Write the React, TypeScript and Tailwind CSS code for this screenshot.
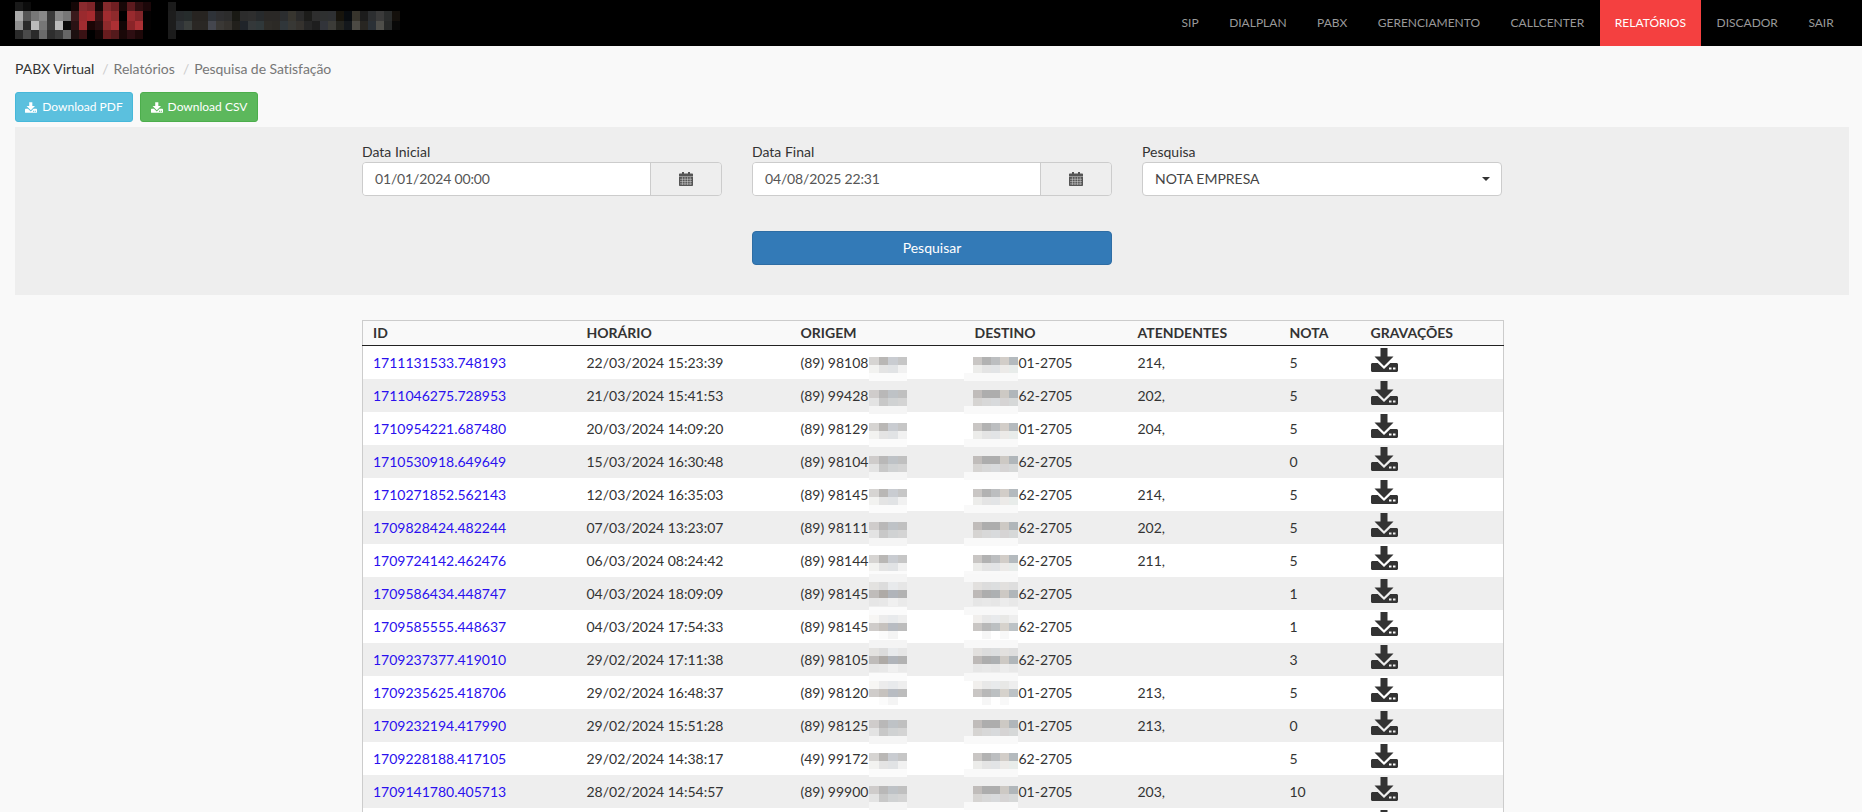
import React from "react";

const LOGO_COLORS: string[][] = [
  ["#1a1a1a","#0c0c0c","#000","#000","#000","#000","#000","#150707","#8a2a2e","#7e2428","#120606","#842a2c","#701f22","#180808","#5c1a1e","#2e0e10","#1c0709"],
  ["#aaaaaa","#555555","#777777","#888888","#3a3a3a","#888888","#777777","#3a1a1c","#9a2a2e","#a62a2e","#3a1214","#a02c30","#8e2a2c","#000","#982a2e","#822428","#050202"],
  ["#8f8f8f","#2a2a2a","#bbbbbb","#777777","#3c3c3c","#bbbbbb","#0a0a0a","#2a1214","#a02c30","#1c0606","#280e10","#8e2a2c","#ac3034","#120606","#8a2428","#ac3034","#050202"],
  ["#2a2a2a","#4a4a4a","#2a2a2a","#6a6a6a","#2e2e2e","#3a3a3a","#666666","#1c1010","#3a1214","#000","#120606","#681c1e","#541a1c","#1a0808","#2e0e12","#1e0809","#000"],
];
const TITLE_TOP = ["#1d1d1d","#26292b","#262c2c","#272421","#272421","#2e3238","#2e2e30","#2c2c2c","#191914","#2c2c2c","#2e2e2e","#272a2c","#2a2826","#2a2826","#2b2d2f","#37352f","#2a2a2a","#1c1c1a","#2e2e2e","#2e3030","#2e3032","#17140c","#080c10","#37342c","#1c1c1c","#2c2e30","#3a3a3a","#2a2c2c","#14100c"];
const TITLE_BOT = ["#1d1d1d","#2e3236","#3a3e3c","#2a2724","#2a2724","#44464e","#3a3835","#35322e","#22201c","#20242a","#34383a","#30383a","#2e2c28","#2c2a26","#30363a","#383835","#35322e","#262626","#1e1e1e","#32343a","#3c3c38","#24241f","#14181c","#4c4a44","#282622","#2a3036","#4e4e4a","#262828","#080808"];

function Mosaic({ rows, w, h }: { rows: string[][]; w: number; h: number }) {
  return (
    <svg width={rows[0].length * w} height={rows.length * h} shapeRendering="crispEdges" className="block">
      {rows.map((r, y) => r.map((c, x) => <rect key={x} x={x * w} y={y * h} width={w} height={h} fill={c} />))}
    </svg>
  );
}

function DownloadIcon({ className }: { className?: string }) {
  return (
    <svg viewBox="0 0 27 24" className={className} fill="currentColor" fillRule="evenodd">
      <path d="M9.5 0h7v8.5h6L13 18 3.5 8.5h6z" />
      <path d="M1.5 15h5.2l6.3 6 6.3-6h6.2c.8 0 1.5.7 1.5 1.5v6c0 .8-.7 1.5-1.5 1.5h-24C.7 24 0 23.300 0 22.500v-6C0 15.700.7 15 1.500 15zM18 19.500v2h2.500v-2zM22 19.500v2h2.500v-2z" />
    </svg>
  );
}

function CalendarIcon() {
  return (
    <svg viewBox="0 0 14 14" className="h-[14px] w-[14px] text-[#555]" fill="currentColor">
      <path d="M3 0h2v1.500h4V0h2v1.500h2c.6 0 1 .4 1 1V13c0 .6-.4 1-1 1H1c-.6 0-1-.4-1-1V2.500c0-.6.4-1 1-1h2z" />
      <path d="M0 4.500h14M1 7.300h12M1 9.600h12M1 11.900h12M3.400 5v8M6 5v8M8.600 5v8M11.200 5v8" stroke="#eeeeee" strokeWidth="0.6" strokeOpacity="0.75" fill="none" />
    </svg>
  );
}

type Row = { id: string; time: string; from: string; to: string; att: string; note: string };
const DATA: Row[] = [
  { id: "1711131533.748193", time: "22/03/2024 15:23:39", from: "(89) 98108", to: "01-2705", att: "214,", note: "5" },
  { id: "1711046275.728953", time: "21/03/2024 15:41:53", from: "(89) 99428", to: "62-2705", att: "202,", note: "5" },
  { id: "1710954221.687480", time: "20/03/2024 14:09:20", from: "(89) 98129", to: "01-2705", att: "204,", note: "5" },
  { id: "1710530918.649649", time: "15/03/2024 16:30:48", from: "(89) 98104", to: "62-2705", att: "", note: "0" },
  { id: "1710271852.562143", time: "12/03/2024 16:35:03", from: "(89) 98145", to: "62-2705", att: "214,", note: "5" },
  { id: "1709828424.482244", time: "07/03/2024 13:23:07", from: "(89) 98111", to: "62-2705", att: "202,", note: "5" },
  { id: "1709724142.462476", time: "06/03/2024 08:24:42", from: "(89) 98144", to: "62-2705", att: "211,", note: "5" },
  { id: "1709586434.448747", time: "04/03/2024 18:09:09", from: "(89) 98145", to: "62-2705", att: "", note: "1" },
  { id: "1709585555.448637", time: "04/03/2024 17:54:33", from: "(89) 98145", to: "62-2705", att: "", note: "1" },
  { id: "1709237377.419010", time: "29/02/2024 17:11:38", from: "(89) 98105", to: "62-2705", att: "", note: "3" },
  { id: "1709235625.418706", time: "29/02/2024 16:48:37", from: "(89) 98120", to: "01-2705", att: "213,", note: "5" },
  { id: "1709232194.417990", time: "29/02/2024 15:51:28", from: "(89) 98125", to: "01-2705", att: "213,", note: "0" },
  { id: "1709228188.417105", time: "29/02/2024 14:38:17", from: "(49) 99172", to: "62-2705", att: "", note: "5" },
  { id: "1709141780.405713", time: "28/02/2024 14:54:57", from: "(89) 99900", to: "01-2705", att: "203,", note: "10" },
];

const PATCH_O: Record<string, string[][]> = {
  white: [
    ["#d6d4d2","#b9b7b5","#c9ccd1","#c6c6c6"],
    ["#f2f2f0","#e4e4e4","#e1e3e5","#f1f1f1"],
    ["#fbfbfb","#fbfbfb","#fbfbfb","#fbfbfb"],
  ],
  grey: [
    ["#cfcccb","#b9b8b8","#bec2c6","#c0c0c0"],
    ["#e3e3e3","#c8c8c8","#d0d2d3","#d4d4d4"],
    ["#f5f5f5","#f5f5f5","#f5f5f5","#f5f5f5"],
  ],
};
const PATCH_O_HIGH: Record<string, string[][]> = {
  white: [
    ["#fbfbfb","#fbfbfb","#fbfbfb","#fbfbfb"],
    ["#f7f6f4","#ececec","#e8eaec","#eeeeee"],
    ["#cfccca","#c6c2be","#b8bcc2","#bcbcbc"],
    ["#ffffff","#fbfbfb","#f4f4f4","#ffffff"],
  ],
  grey: [
    ["#f4f4f4","#f4f4f4","#f4f4f4","#f4f4f4"],
    ["#e3e2e0","#dcdcdc","#e8eaec","#e6e6e6"],
    ["#bfbcba","#aeaaa6","#b0b4ba","#b2b2b2"],
    ["#e6e6e6","#e8e8e8","#f0f0f0","#eaeaea"],
  ],
};
const PATCH_D: Record<string, string[][]> = {
  white: [
    ["#c9c6c4","#b2b2b2","#bcbec0","#d2cdc8","#b4babe"],
    ["#ececea","#e4e4e4","#e2e4e6","#eceae8","#e8ecea"],
  ],
  grey: [
    ["#c0bcba","#adadad","#adadad","#cdc9c4","#b0b6ba"],
    ["#d6d4d2","#d8d8d8","#d8dadc","#d6d4d4","#d6d8d8"],
  ],
};
const PATCH_D_HIGH: Record<string, string[][]> = {
  white: [
    ["#f1efed","#e8e8e8","#e8eaec","#e8e8e6","#eeeeee"],
    ["#c9c6c4","#b8b8b8","#bcc0c2","#d6d2cc","#bcc2c6"],
    ["#ffffff","#f6f6f6","#ffffff","#f8f8f8","#ffffff"],
  ],
  grey: [
    ["#e2e0de","#dcdcdc","#dcdedf","#e2e0de","#dedede"],
    ["#bdb9b7","#adadad","#adb0b2","#cdc9c4","#b0b6ba"],
    ["#e6e6e6","#e8e8e8","#e6e6e6","#ececec","#e8e8e8"],
  ],
};

function TableRow({ r, i }: { r: Row; i: number }) {
  const shade = i % 2 === 1 ? "grey" : "white";
  const high = i >= 7 && i <= 10;
  return (
    <tr className={`h-[33px] ${i % 2 === 1 ? "bg-[#eeeeee]" : "bg-white"}`}>
      <td className="px-[10px] pt-[2px]"><a className="text-[#2a10ee]">{r.id}</a></td>
      <td className="px-[10px] pt-[2px]">{r.time}</td>
      <td className="relative px-[10px] pt-[2px]">
        {r.from}
        {high ? (
          <span className="absolute left-[78px] top-[-3px] z-10"><Mosaic rows={PATCH_O_HIGH[shade]} w={9.500} h={8} /></span>
        ) : (
          <span className="absolute left-[78px] top-[11px] z-10"><Mosaic rows={PATCH_O[shade]} w={9.500} h={8} /></span>
        )}
      </td>
      <td className="relative pl-[54px] pr-[10px] pt-[2px]">
        {high ? (
          <>
            <span className="absolute left-[-1px] top-[-3px] z-10 h-[8px] w-[54px] bg-[#f8f8f8]" />
            <span className="absolute left-[8px] top-[5px] z-10"><Mosaic rows={PATCH_D_HIGH[shade]} w={9} h={8} /></span>
          </>
        ) : (
          <>
            <span className="absolute left-[8px] top-[11px] z-10"><Mosaic rows={PATCH_D[shade]} w={9} h={8} /></span>
            <span className="absolute left-[-1px] top-[27px] z-10 h-[8px] w-[54px] bg-[#f9f9f9]" />
          </>
        )}
        {r.to}
      </td>
      <td className="px-[10px] pt-[2px]">{r.att}</td>
      <td className="px-[10px] pt-[2px]">{r.note}</td>
      <td className="px-[10px] pt-[2px] align-top"><DownloadIcon className="block h-[24px] w-[27px] text-[#333]" /></td>
    </tr>
  );
}

function DateField({ label, value }: { label: string; value: string }) {
  return (
    <div className="w-[360px]">
      <div className="h-[20px] leading-[20px]">{label}</div>
      <div className="flex h-[34px] overflow-hidden rounded-[4px] border border-[#cccccc]">
        <div className="flex flex-1 items-center bg-white px-3 tracking-[-0.15px] text-[#555]">{value}</div>
        <div className="flex w-[71px] items-center justify-center border-l border-[#cccccc] bg-[#eeeeee]"><CalendarIcon /></div>
      </div>
    </div>
  );
}

const NAV = ["SIP", "DIALPLAN", "PABX", "GERENCIAMENTO", "CALLCENTER", "RELATÓRIOS", "DISCADOR", "SAIR"];
const HEAD: [string, string][] = [["ID","w-[214px]"],["HORÁRIO","w-[214px]"],["ORIGEM","w-[174px]"],["DESTINO","w-[163px]"],["ATENDENTES","w-[152px]"],["NOTA","w-[81px]"],["GRAVAÇÕES",""]];

export default function App() {
  return (
    <div className="h-[812px] overflow-hidden bg-[#f9f9f9] font-['Lato','Open_Sans',sans-serif] text-[14px] leading-[20px] text-[#333]">
      <header className="flex h-[46px] items-stretch justify-between bg-black">
        <div className="flex items-start pl-[15px] pt-[2px]">
          <Mosaic rows={LOGO_COLORS} w={8} h={9.25} />
          <span className="ml-[17px]">
            <svg width={232} height={37} shapeRendering="crispEdges" className="block">
              <rect x={0} y={0} width={8} height={37} fill="#1b1b1b" />
              {TITLE_TOP.map((c, i) => <rect key={i} x={i * 8} y={9} width={8} height={10} fill={c} />)}
              {TITLE_BOT.map((c, i) => <rect key={i} x={i * 8} y={19} width={8} height={9} fill={c} />)}
            </svg>
          </span>
        </div>
        <nav className="flex pr-[13px] text-[12px]">
          {NAV.map((n) => (
            <a key={n} className={`flex items-center px-[15.25px] ${n === "RELATÓRIOS" ? "bg-[#f44040] text-white" : "text-[#999999]"}`}>{n}</a>
          ))}
        </nav>
      </header>

      <main className="pl-[15px] pr-[13px]">
        <div className="flex pt-[13px]">
          <span>PABX Virtual</span>
          <span className="pl-[8px] pr-[5px] text-[#cccccc]">/</span>
          <span className="text-[#777777]">Relatórios</span>
          <span className="pl-[8px] pr-[5px] text-[#cccccc]">/</span>
          <span className="tracking-[-0.05px] text-[#777777]">Pesquisa de Satisfação</span>
        </div>

        <div className="mt-[13px] flex gap-[7px] text-[12px] text-white">
          <button className="flex h-[30px] w-[118px] items-center justify-center gap-[5px] rounded-[3px] border border-[#46b8da] bg-[#5bc0de]">
            <DownloadIcon className="h-[11px] w-[12px]" />Download PDF
          </button>
          <button className="flex h-[30px] w-[118px] items-center justify-center gap-[5px] rounded-[3px] border border-[#4cae4c] bg-[#5cb85c]">
            <DownloadIcon className="h-[11px] w-[12px]" />Download CSV
          </button>
        </div>

        <section className="mt-[5px] h-[168px] bg-[#eeeeee] pl-[347px] pt-[15px]">
          <div className="flex gap-[30px]">
            <DateField label="Data Inicial" value="01/01/2024 00:00" />
            <DateField label="Data Final" value="04/08/2025 22:31" />
            <div className="w-[360px]">
              <div className="h-[20px]">Pesquisa</div>
              <div className="flex h-[34px] items-center justify-between rounded-[4px] border border-[#cccccc] bg-white pl-3 pr-[11px] text-[#444]">
                NOTA EMPRESA
                <span className="h-0 w-0 border-x-[4px] border-t-[4px] border-x-transparent border-t-[#333]" />
              </div>
            </div>
          </div>
          <button className="ml-[390px] mt-[35px] flex h-[34px] w-[360px] items-center justify-center rounded-[4px] border border-[#2e6da4] bg-[#337ab7] text-white">
            Pesquisar
          </button>
        </section>

        <table className="ml-[347px] mt-[25px] w-[1142px] table-fixed border-collapse border border-[#cccccc]">
          <thead>
            <tr className="h-[25px] border-b border-[#222]">
              {HEAD.map(([h, w]) => <th key={h} className={`px-[10px] text-left font-bold ${w}`}>{h}</th>)}
            </tr>
          </thead>
          <tbody>
            {DATA.map((r, i) => <TableRow key={r.id} r={r} i={i} />)}
            <tr className="h-[33px] bg-white">
              <td colSpan={6} />
              <td className="px-[10px] pt-[2px] align-top"><DownloadIcon className="block h-[24px] w-[27px] text-[#333]" /></td>
            </tr>
          </tbody>
        </table>
      </main>
    </div>
  );
}
